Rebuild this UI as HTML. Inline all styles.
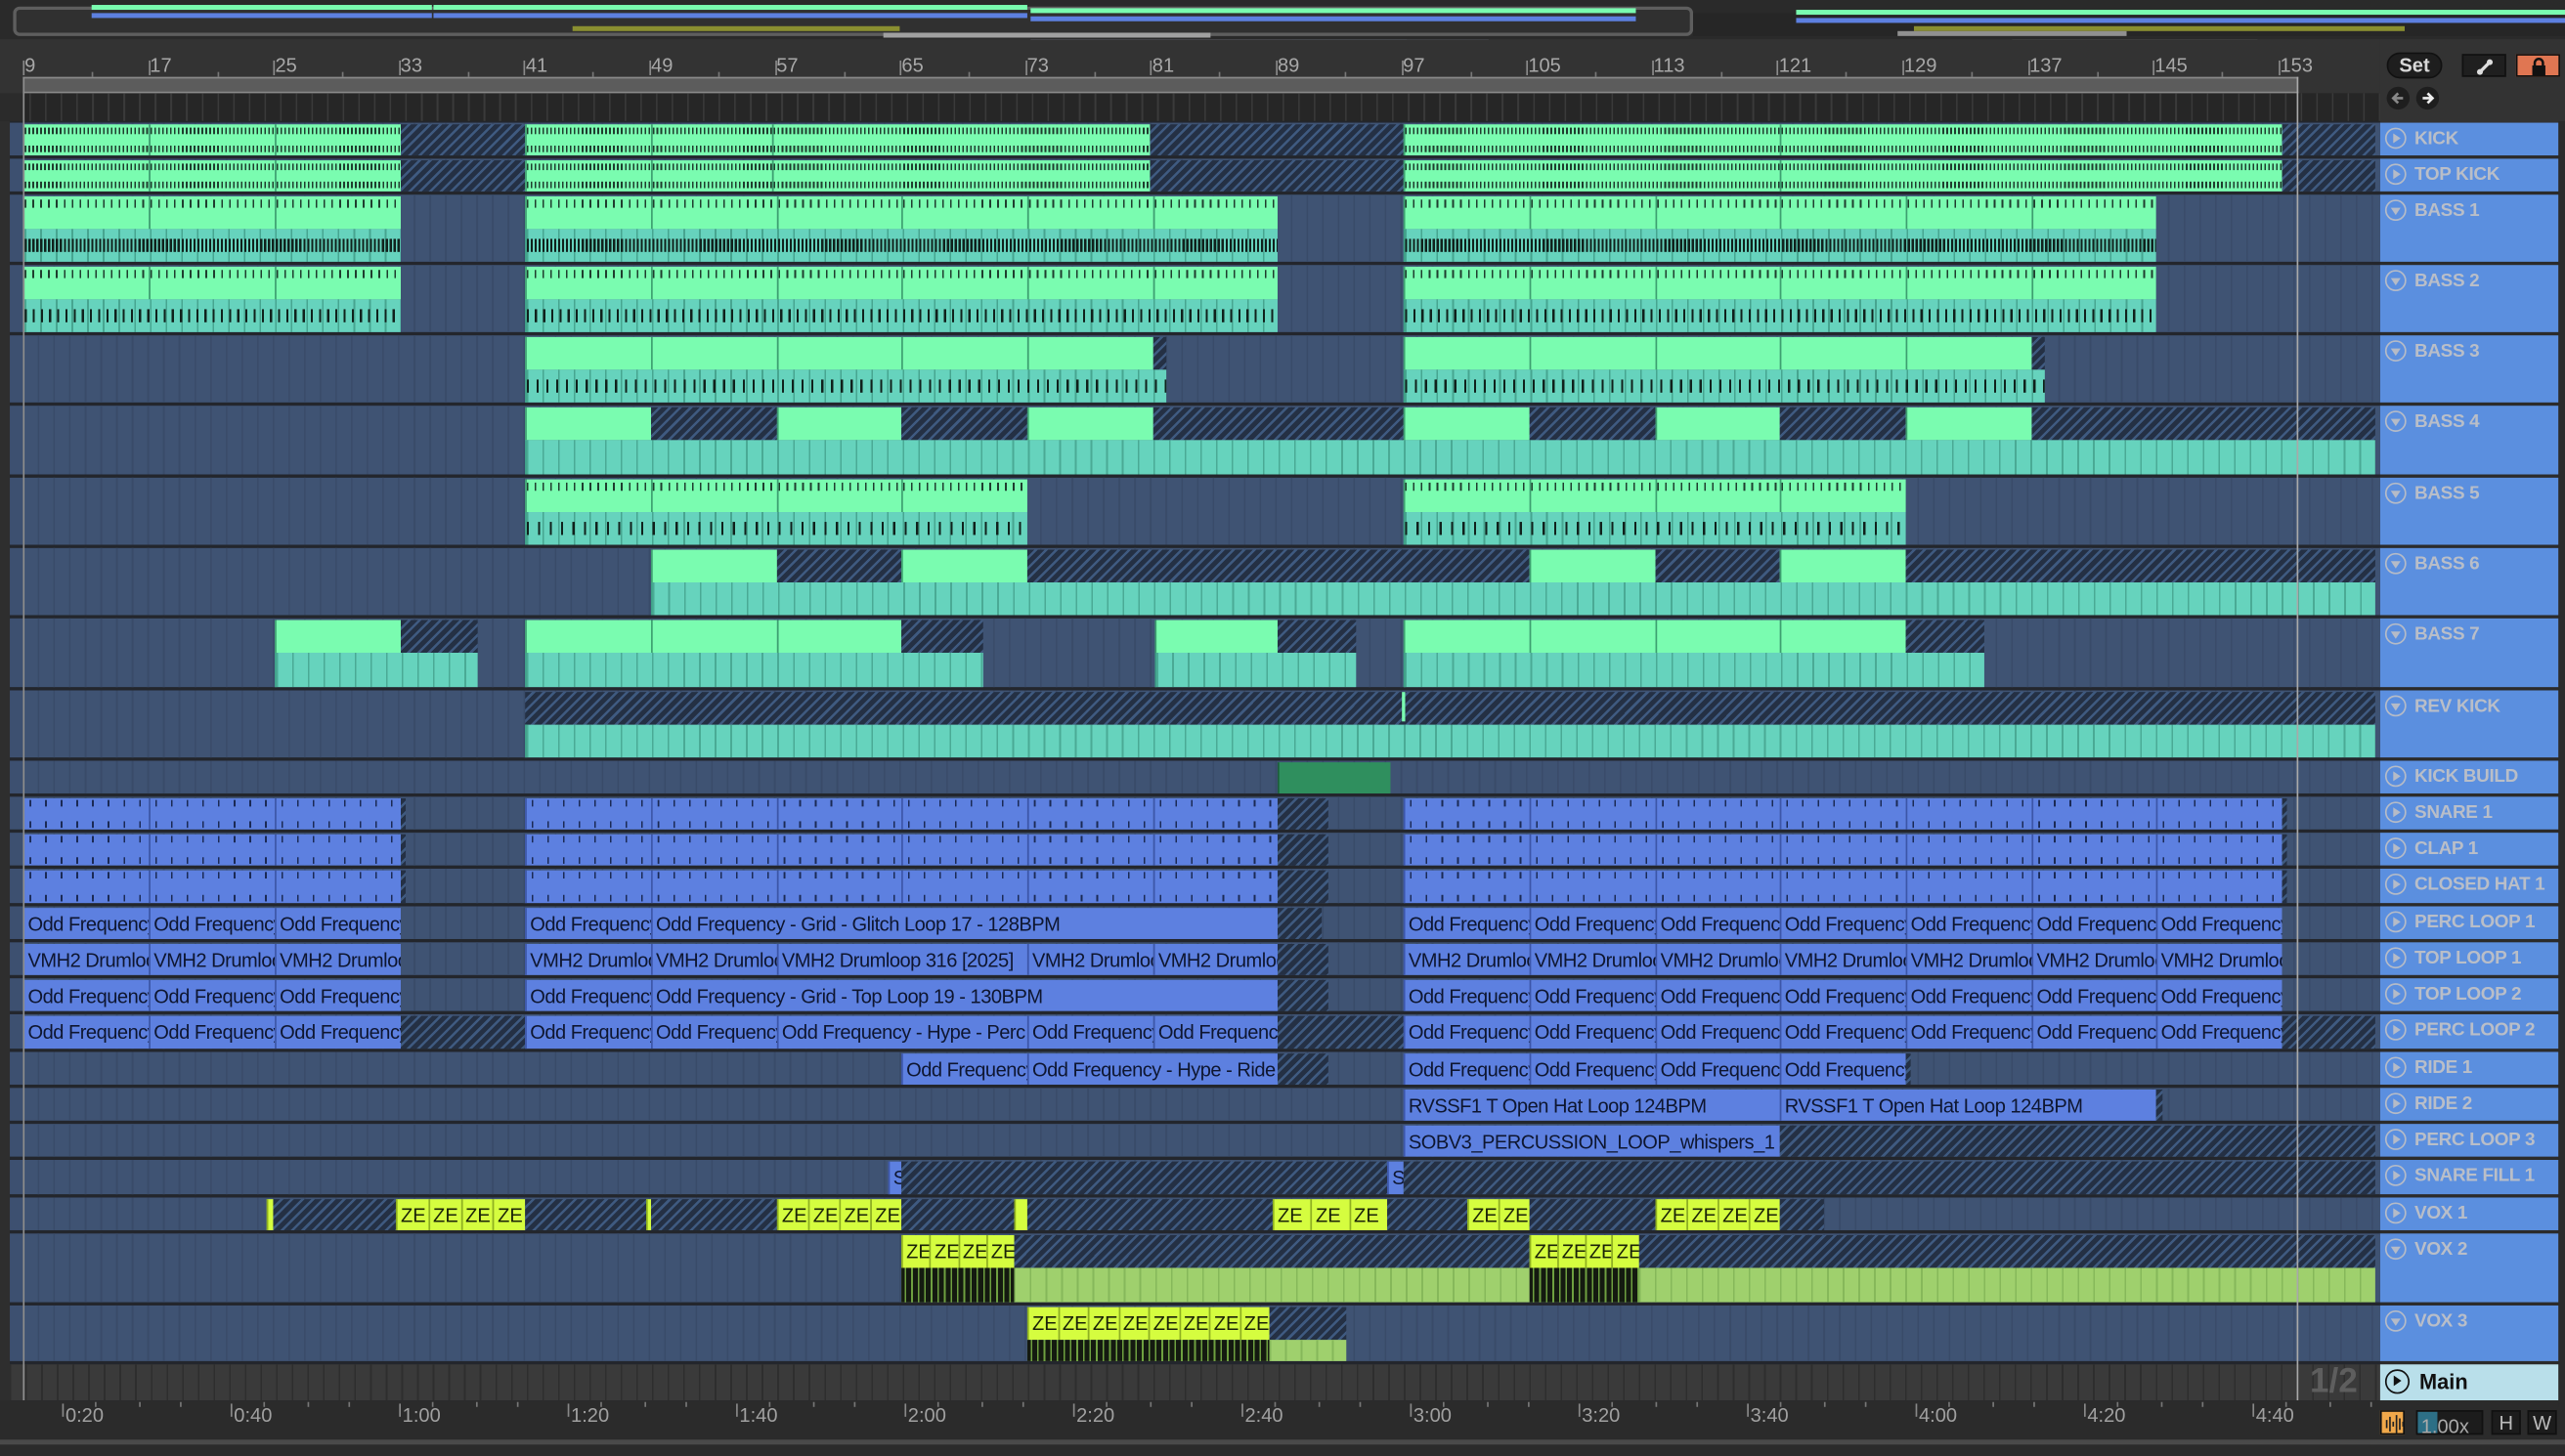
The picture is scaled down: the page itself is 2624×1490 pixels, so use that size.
<!DOCTYPE html>
<html><head><meta charset="utf-8">
<style>
html,body{margin:0;padding:0;background:#2b2b2b;overflow:hidden;width:2624px;height:1490px}
#s{position:absolute;left:0;top:0;width:1568px;height:890px;transform-origin:0 0;transform:scale(1.67347,1.67416);background:#2b2b2b;font-family:"Liberation Sans",sans-serif}
.a{position:absolute;box-sizing:border-box}
.lane{background-color:#3f5373;background-image:repeating-linear-gradient(90deg,#394b69 0 1px,transparent 1px 9.575px);background-position:-0.5px 0}
.g{background:#7afcb0;border-left:1px solid #3d9f70}
.t{background-color:#66d3bd;border-left:1px solid #3d9f85;background-image:repeating-linear-gradient(90deg,rgba(40,120,100,.45) 0 1px,transparent 1px 9.575px)}
.b{background:#5d80e0;border-left:1px solid #3c56a8;color:#0e1630;font-size:12px;line-height:20px;white-space:nowrap;overflow:hidden;padding-left:2px;letter-spacing:-.3px}
.h{background:repeating-linear-gradient(135deg,#243044 0 3px,#3f5a80 3px 4.5px)}
.y{background:#d5fd3f;border-left:1px solid #8fb020;color:#1a2208;font-size:12px;line-height:20px;white-space:nowrap;overflow:hidden;padding-left:2px}
.w{background-color:#9fd06d;background-image:repeating-linear-gradient(90deg,#141a10 0 2px,#6ea040 2px 3px,#141a10 3px 4px);}
.v{background-color:#9fd06d;background-image:repeating-linear-gradient(90deg,#86b85a 0 1px,transparent 1px 9.575px)}
.k{background:#2f8f5e;border-left:1px solid #1d5c3c}
.hd{background:#5b8fdf;color:#b9bec8;font-weight:bold;font-size:11.3px;overflow:hidden}
.ic{position:absolute;left:3px;top:3px;width:13px;height:13px;border:1.3px solid #b5bbc7;border-radius:50%;box-sizing:border-box}
.lbl{position:absolute;left:21px;top:3px;line-height:14px;white-space:nowrap;letter-spacing:-.2px}
.num{position:absolute;top:33px;color:#a8a8a8;font-size:12px}
.tm{position:absolute;top:858px;color:#a0a0a0;font-size:12px}
</style></head><body>
<div id="s"></div>
<script>
const S=document.getElementById('s');
function d(cls,x,y,w,h,html,st){const e=document.createElement('div');e.className='a '+(cls||'');e.style.left=x+'px';e.style.top=y+'px';e.style.width=w+'px';e.style.height=h+'px';if(st)e.style.cssText+=st;if(html)e.innerHTML=html;S.appendChild(e);return e;}
d('',0,0,1568,24,'','background:#2a2a2a');
d('',8,4,1027,18,'','border:2px solid #5e5e5e;border-radius:4px;background:#303030');
d('',1035,8,533,14,'','background:#262626');
const ov=[[56,1,208,'#7afcb0'],[56,6,208,'#5d80e0'],[265,1,363,'#7afcb0'],[265,6,363,'#5d80e0'],[630,3,370,'#7afcb0'],[630,8,370,'#5d80e0'],[1098,4,470,'#7afcb0'],[1098,9,470,'#5d80e0'],[350,14,200,'#8a8f30'],[1170,14,300,'#8a8f30'],[540,18,200,'#a0a0a0'],[1160,17,140,'#909090'],[1230,22,150,'#909090'],[630,22,230,'#cfd6f0'],[790,22,120,'#9aa4c0']];
ov.forEach(o=>d('',o[0],o[1]+2,o[2],3,'','background:'+o[3]));
d('',0,24,1455,33,'','background:#333');
const bars=[9,17,25,33,41,49,57,65,73,81,89,97,105,113,121,129,137,145,153];
bars.forEach((b,i)=>{const x=18+i*76.6;d('',x-4,37,1,9,'','background:#8a8a8a');const n=d('num',x-3,33,30,14,''+b);if(i<18)d('',x+38,44,1,3,'','background:#777');});
d('',14,47,1391,10,'','background:#5c5c5c;border-top:1px solid #8a8a8a;border-bottom:1px solid #8a8a8a');
d('',14,57,1441,17,'','background:#262626;background-image:repeating-linear-gradient(90deg,#3a3a3a 0 1px,transparent 1px 9.575px);background-position:4px 0');
d('',1455,24,113,51,'','background:#333');
d('',1459,32,34,16,'Set','background:#1e1e1e;border:1px solid #111;border-radius:9px;color:#d8d8d8;font-size:12px;text-align:center;line-height:15px;font-weight:bold');
d('',1505,33,27,14,'<svg width="27" height="14"><line x1="10" y1="10" x2="16" y2="4" stroke="#ddd" stroke-width="2"/><circle cx="10" cy="10" r="1.8" fill="#ddd"/><circle cx="16" cy="4" r="1.8" fill="#ddd"/></svg>','background:#1f1f1f;border:1px solid #111');
d('',1538,33,27,14,'<svg width="27" height="14"><rect x="9" y="6" width="8" height="6" fill="#111"/><path d="M10.5 6 V4.5 a2.5 2.5 0 0 1 5 0 V6" stroke="#111" stroke-width="1.5" fill="none"/></svg>','background:#e07652;border:1px solid #111');
d('',1459,53,14,14,'<svg width="14" height="14"><path d="M10 7H4M7 4L4 7L7 10" stroke="#888" stroke-width="1.6" fill="none"/></svg>','background:#1e1e1e;border-radius:50%');
d('',1477,53,14,14,'<svg width="14" height="14"><path d="M4 7H10M7 4L10 7L7 10" stroke="#eee" stroke-width="1.6" fill="none"/></svg>','background:#1e1e1e;border-radius:50%');
d('',0,74,1455,786,'','background:#23262c');
d('',0,74,6,786,'','background:#2e2e2e');
const tracks=[
['KICK',75,22,'p'],['TOP KICK',97,22,'p'],['BASS 1',119,43,'d'],['BASS 2',162,43,'d'],['BASS 3',205,43,'d'],['BASS 4',248,44,'d'],['BASS 5',292,43,'d'],['BASS 6',335,43,'d'],['BASS 7',378,44,'d'],['REV KICK',422,43,'d'],['KICK BUILD',465,22,'p'],['SNARE 1',487,22,'p'],['CLAP 1',509,22,'p'],['CLOSED HAT 1',531,23,'p'],['PERC LOOP 1',554,22,'p'],['TOP LOOP 1',576,22,'p'],['TOP LOOP 2',598,22,'p'],['PERC LOOP 2',620,23,'p'],['RIDE 1',643,22,'p'],['RIDE 2',665,22,'p'],['PERC LOOP 3',687,22,'p'],['SNARE FILL 1',709,23,'p'],['VOX 1',732,22,'p'],['VOX 2',754,44,'d'],['VOX 3',798,36,'d']];
const TY={};
tracks.forEach(t=>{TY[t[0]]=t;
 d('',6,t[1],8,t[2]-2,'','background:#3d5070');
 d('lane',14,t[1],1441,t[2]-2);
 const h=d('hd',1455,t[1],109,t[2]-2,'');
 h.innerHTML='<div class="ic"><svg width="11" height="11" style="position:absolute;left:0;top:0">'+(t[3]=='p'?'<path d="M4 2.5L8.5 5.5L4 8.5Z" fill="#b5bbc7"/>':'<path d="M2.5 4L8.5 4L5.5 8.5Z" fill="#b5bbc7"/>')+'</svg></div><div class="lbl">'+t[0]+'</div>';
});
function C(tn,x1,x2,cls,part,txt,st){const t=TY[tn];let y=t[1]+1,h=t[2]-3;
 if(part==1){h=Math.floor(h/2);} else if(part==2){const hh=Math.floor(h/2);y=y+hh;h=h-hh;}
 return d(cls,x1,y,x2-x1,h,txt||'',st);}
function seg(tn,b,cls,part,txt,st){for(let i=0;i<b.length-1;i++)C(tn,b[i],b[i+1],cls,part,(typeof txt=='function'?txt(i):txt),st);}
const kickSt='background-image:repeating-linear-gradient(90deg,#1f3d2e 0 1px,transparent 1px 2.4px),repeating-linear-gradient(90deg,#1f3d2e 0 1px,transparent 1px 2.4px);background-size:100% 4px,100% 4px;background-position:0 2px,0 calc(100% - 2px);background-repeat:no-repeat';
['KICK','TOP KICK'].forEach(k=>{seg(k,[14,91,168,245],'g',0,'',kickSt);C(k,245,321,'h');seg(k,[321,398,472,703],'g',0,'',kickSt);C(k,703,858,'h');seg(k,[858,1088,1395],'g',0,'',kickSt);C(k,1395,1452,'h');});
const topT='background-image:repeating-linear-gradient(90deg,#1f3d2e 0 1px,transparent 1px 4.8px);background-size:100% 5px;background-position:0 2px;background-repeat:no-repeat';
const noteT=(den)=>'background-image:repeating-linear-gradient(90deg,#10211c 0 1.3px,transparent 1.3px '+den+'px),repeating-linear-gradient(90deg,rgba(40,120,100,.5) 0 1px,transparent 1px 9.575px);background-size:100% 40%,100% 100%;background-position:0 50%,0 0;background-repeat:no-repeat,repeat';
function big(tn,b,den){seg(tn,b,'g',1,'',topT);C(tn,b[0],b[b.length-1],'t',2,'',noteT(den));}
big('BASS 1',[14,91,168,245],2.4);big('BASS 1',[321,398,475,551,628,705,781],2.4);big('BASS 1',[858,935,1012,1088,1165,1242,1318],2.4);
big('BASS 2',[14,91,168,245],5);big('BASS 2',[321,398,475,551,628,705,781],5);big('BASS 2',[858,935,1012,1088,1165,1242,1318],5);
seg('BASS 3',[321,398,475,551,628,705],'g',1);C('BASS 3',705,713,'h',1);C('BASS 3',321,713,'t',2,'',noteT(6));
seg('BASS 3',[858,935,1012,1088,1165,1242],'g',1);C('BASS 3',1242,1250,'h',1);C('BASS 3',858,1250,'t',2,'',noteT(6));
function pat(tn,list){list.forEach(p=>C(tn,p[0],p[1],p[2],1));}
pat('BASS 4',[[321,398,'g'],[398,475,'h'],[475,551,'g'],[551,628,'h'],[628,705,'g'],[705,858,'h'],[858,935,'g'],[935,1012,'h'],[1012,1088,'g'],[1088,1165,'h'],[1165,1242,'g'],[1242,1452,'h']]);
C('BASS 4',321,1452,'t',2);
big('BASS 5',[321,398,475,551,628],7);big('BASS 5',[858,935,1012,1088,1165],7);
pat('BASS 6',[[398,475,'g'],[475,551,'h'],[551,628,'g'],[628,935,'h'],[935,1012,'g'],[1012,1088,'h'],[1088,1165,'g'],[1165,1452,'h']]);
C('BASS 6',398,1452,'t',2);
pat('BASS 7',[[168,245,'g'],[245,292,'h'],[321,398,'g'],[398,475,'g'],[475,551,'g'],[551,601,'h'],[706,781,'g'],[781,829,'h'],[858,935,'g'],[935,1012,'g'],[1012,1088,'g'],[1088,1165,'g'],[1165,1213,'h']]);
[[168,292],[321,601],[706,829],[858,1213]].forEach(p=>C('BASS 7',p[0],p[1],'t',2));
C('REV KICK',321,1452,'h',1);C('REV KICK',321,1452,'t',2);d('',857,423,1.5,18,'','background:#7afcb0');
C('KICK BUILD',781,850,'k');
const blueT='background-image:repeating-linear-gradient(90deg,#1b2a55 0 1px,transparent 1px 9.575px),repeating-linear-gradient(90deg,#1b2a55 0 1px,transparent 1px 9.575px);background-size:100% 4px,100% 4px;background-position:3px 1px,3px calc(100% - 1px);background-repeat:no-repeat';
['SNARE 1','CLAP 1','CLOSED HAT 1'].forEach(k=>{seg(k,[14,91,168,245],'b',0,'',blueT);C(k,245,248,'h');seg(k,[321,398,475,551,628,705,781],'b',0,'',blueT);C(k,781,812,'h');seg(k,[858,935,1012,1088,1165,1242,1318,1395],'b',0,'',blueT);C(k,1395,1398,'h');});
const OF='Odd Frequency - Grid',VM='VMH2 Drumloop 316 [2025]';
seg('PERC LOOP 1',[14,91,168,245],'b',0,OF);seg('PERC LOOP 1',[321,398],'b',0,OF);C('PERC LOOP 1',398,781,'b',0,'Odd Frequency - Grid -  Glitch Loop 17 - 128BPM');C('PERC LOOP 1',781,808,'h');seg('PERC LOOP 1',[858,935,1012,1088,1165,1242,1318,1395],'b',0,OF);
seg('TOP LOOP 1',[14,91,168,245],'b',0,VM);seg('TOP LOOP 1',[321,398,475],'b',0,VM);C('TOP LOOP 1',475,628,'b',0,VM);seg('TOP LOOP 1',[628,705,781],'b',0,VM);C('TOP LOOP 1',781,812,'h');seg('TOP LOOP 1',[858,935,1012,1088,1165,1242,1318,1395],'b',0,VM);
seg('TOP LOOP 2',[14,91,168,245],'b',0,OF);seg('TOP LOOP 2',[321,398],'b',0,OF);C('TOP LOOP 2',398,781,'b',0,'Odd Frequency - Grid -  Top Loop 19 - 130BPM');C('TOP LOOP 2',781,812,'h');seg('TOP LOOP 2',[858,935,1012,1088,1165,1242,1318,1395],'b',0,OF);
seg('PERC LOOP 2',[14,91,168,245],'b',0,OF);C('PERC LOOP 2',245,321,'h');seg('PERC LOOP 2',[321,398,475],'b',0,OF);C('PERC LOOP 2',475,628,'b',0,'Odd Frequency - Hype - Perc');seg('PERC LOOP 2',[628,705,781],'b',0,OF);C('PERC LOOP 2',781,858,'h');seg('PERC LOOP 2',[858,935,1012,1088,1165,1242,1318,1395],'b',0,OF);C('PERC LOOP 2',1395,1452,'h');
C('RIDE 1',551,628,'b',0,OF);C('RIDE 1',628,781,'b',0,'Odd Frequency - Hype - Ride');C('RIDE 1',781,812,'h');seg('RIDE 1',[858,935,1012,1088,1165],'b',0,OF);C('RIDE 1',1165,1168,'h');
C('RIDE 2',858,1088,'b',0,'RVSSF1 T Open Hat Loop 124BPM');C('RIDE 2',1088,1318,'b',0,'RVSSF1 T Open Hat Loop 124BPM');C('RIDE 2',1318,1322,'h');
C('PERC LOOP 3',858,1088,'b',0,'SOBV3_PERCUSSION_LOOP_whispers_1');C('PERC LOOP 3',1088,1452,'h');
C('SNARE FILL 1',543,551,'b',0,'S');C('SNARE FILL 1',551,848,'h');C('SNARE FILL 1',848,858,'b',0,'S');C('SNARE FILL 1',858,1452,'h');
function ze(tn,a,b,n,part){const w=(b-a)/n;for(let i=0;i<n;i++)C(tn,a+i*w,a+(i+1)*w,'y',part,'ZE');}
C('VOX 1',163,167,'y');C('VOX 1',167,242,'h');ze('VOX 1',242,321,4);C('VOX 1',321,395,'h');C('VOX 1',395,398,'y');C('VOX 1',398,475,'h');ze('VOX 1',475,551,4);C('VOX 1',551,620,'h');C('VOX 1',620,628,'y');C('VOX 1',628,778,'h');ze('VOX 1',778,848,3);C('VOX 1',848,897,'h');ze('VOX 1',897,935,2);C('VOX 1',935,1012,'h');ze('VOX 1',1012,1088,4);C('VOX 1',1088,1115,'h');
ze('VOX 2',551,620,4,1);C('VOX 2',620,935,'h',1);ze('VOX 2',935,1002,4,1);C('VOX 2',1002,1452,'h',1);
C('VOX 2',551,620,'w',2);C('VOX 2',620,935,'v',2);C('VOX 2',935,1002,'w',2);C('VOX 2',1002,1452,'v',2);
ze('VOX 3',628,776,8,0);
document.querySelectorAll('.y').forEach(e=>{if(parseFloat(e.style.top)==799){e.style.height='20px';}});
d('h',776,799,47,20);d('w',628,819,148,13);d('v',776,819,47,13);
d('',6,834,1449,22,'','background:#3a3a3a;background-image:repeating-linear-gradient(90deg,#2e2e2e 0 1px,transparent 1px 9.575px)');
d('',1412,832,40,26,'1/2','color:#5e5e5e;font-size:21px;font-weight:bold;line-height:26px');
d('',1455,834,109,22,'<div style="position:absolute;left:3px;top:3px;width:15px;height:15px;border:1.5px solid #111;border-radius:50%;box-sizing:border-box"><svg width="12" height="12" style="position:absolute;left:0;top:0"><path d="M4.3 2.8L9 6L4.3 9.2Z" fill="#111"/></svg></div><div style="position:absolute;left:24px;top:3px;font-size:13px;line-height:15px;color:#111;font-weight:bold">Main</div>','background:#b9dfea');
d('',1404,47,1,809,'','background:#a9a9a9');
d('',14,47,1,809,'','background:#8e8e8e');
d('',0,856,1568,34,'','background:#2b2b2b');
d('',0,880,1568,3,'','background:#4a4a4a');
['0:20','0:40','1:00','1:20','1:40','2:00','2:20','2:40','3:00','3:20','3:40','4:00','4:20','4:40'].forEach((t,i)=>{const x=40+i*103;d('',x-2,858,1,8,'','background:#888');d('tm',x,858,30,14,t);d('',x+18,857,1,3,'','background:#777');d('',x+45,857,1,3,'','background:#777');d('',x+70,857,1,3,'','background:#777');});
d('',1455,862,15,15,'<svg width="15" height="15"><path d="M3 5v5M5 3v9M7 6v3M9 2v11M11 4v7M13 6v3" stroke="#222" stroke-width="1"/></svg>','background:#f0a84a;border:1px solid #111');
d('',1477,862,41,15,'<div style="position:absolute;left:0;top:0;width:12px;height:13px;background:#2d6f86"></div><span style="position:relative;color:#aaa;font-size:12px;line-height:13px;padding-left:2px">1.00x</span>','background:#1c1c1c;border:1px solid #111');
d('',1523,862,18,15,'H','background:#1c1c1c;border:1px solid #111;color:#bbb;font-size:12px;text-align:center;line-height:14px');
d('',1545,862,18,15,'W','background:#1c1c1c;border:1px solid #111;color:#bbb;font-size:12px;text-align:center;line-height:14px');
d('',1564,74,4,786,'','background:#2b2b2b');
</script>
</body></html>
